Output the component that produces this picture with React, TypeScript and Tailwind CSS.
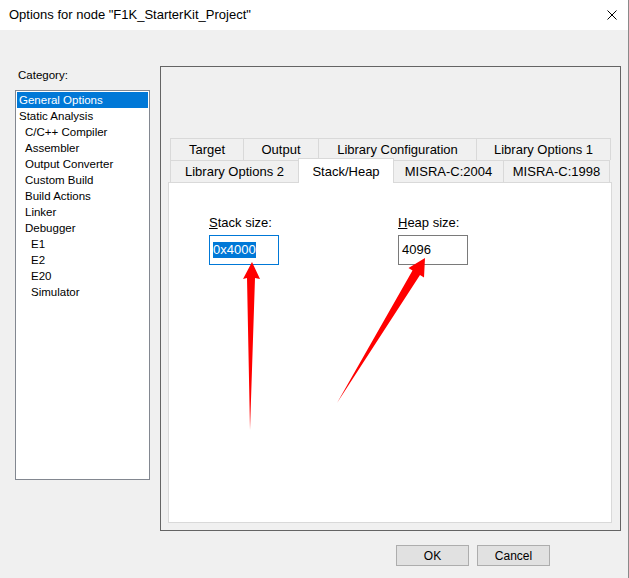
import React from "react";

const categories: { label: string; level: number }[] = [
  { label: "General Options", level: 0 },
  { label: "Static Analysis", level: 0 },
  { label: "C/C++ Compiler", level: 1 },
  { label: "Assembler", level: 1 },
  { label: "Output Converter", level: 1 },
  { label: "Custom Build", level: 1 },
  { label: "Build Actions", level: 1 },
  { label: "Linker", level: 1 },
  { label: "Debugger", level: 1 },
  { label: "E1", level: 2 },
  { label: "E2", level: 2 },
  { label: "E20", level: 2 },
  { label: "Simulator", level: 2 },
];

const indent = ["pl-[2px]", "pl-[8px]", "pl-[14px]"];

const topTabs = [
  { label: "Target", w: "w-[73px]" },
  { label: "Output", w: "w-[75px]" },
  { label: "Library Configuration", w: "w-[158px]" },
  { label: "Library Options 1", w: "w-[135px] border-r" },
];

function Arrows() {
  // red annotation arrows drawn over the dialog
  return (
    <svg className="absolute inset-0 pointer-events-none" width="629" height="578">
      <polygon
        points="250,430 255,278 260,279 252,262 243,279 247,278"
        fill="#ff0000"
      />
      <polygon
        points="337,403 420,275 424,277.5 425,258 408.5,268 412.5,270.5"
        fill="#ff0000"
      />
    </svg>
  );
}

export default function App() {
  return (
    <div
      className="relative w-[629px] h-[578px] bg-[#f0f0f0] border-r border-[#8a8a8a] overflow-hidden text-[13px] text-black"
      style={{ fontFamily: '"Liberation Sans", Arial, sans-serif' }}
    >
      {/* title bar */}
      <div className="h-[30px] bg-white flex items-center justify-between pl-[9px] pr-[11px]">
        <span className="text-[13px]">Options for node "F1K_StarterKit_Project"</span>
        <svg width="10" height="10" viewBox="0 0 10 10">
          <path d="M0.5 0.5L9.5 9.5M9.5 0.5L0.5 9.5" stroke="#000" strokeWidth="1" />
        </svg>
      </div>

      <div className="flex">
        {/* category list */}
        <div className="pl-[15px] pt-[37px] w-[160px] text-[11.5px]">
          <div className="leading-[16px] pl-[3px] mb-[7px]">Category:</div>
          <div className="w-[135px] h-[390px] bg-white border border-[#828790] p-px">
            {categories.map((c, i) => (
              <div
                key={c.label}
                className={
                  "h-[16px] leading-[16px] whitespace-nowrap " +
                  indent[c.level] +
                  (i === 0 ? " bg-[#0078d7] text-white" : "")
                }
              >
                {c.label}
              </div>
            ))}
          </div>
        </div>

        {/* options panel */}
        <div className="mt-[36px] w-[461px] h-[465px] border border-[#646464] pl-[7px] pr-[8px] pt-[71px] pb-[7px] flex flex-col">
          <div className="pl-[2px]">
            <div className="flex h-[22px]">
              {topTabs.map((t) => (
                <div
                  key={t.label}
                  className={"h-[22px] border-t border-l border-[#d9d9d9] flex items-center justify-center " + t.w}
                >
                  {t.label}
                </div>
              ))}
            </div>
            <div className="flex h-[22px] items-end">
              <div className="w-[128px] h-[22px] border-t border-l border-[#d9d9d9] flex items-center justify-center">
                Library Options 2
              </div>
              <div className="relative z-10 w-[96px] h-[25px] -mb-px bg-white border-t border-l border-r border-[#d9d9d9] flex items-start pt-[3px] justify-center">
                Stack/Heap
              </div>
              <div className="w-[109px] h-[22px] border-t border-[#d9d9d9] flex items-center justify-center">
                MISRA-C:2004
              </div>
              <div className="w-[107px] h-[22px] border-t border-l border-r border-[#d9d9d9] flex items-center justify-center">
                MISRA-C:1998
              </div>
            </div>
          </div>
          <div className="flex-1 bg-white border border-[#d9d9d9] pl-[40px] pt-[32px] flex gap-[119px]">
            <div>
              <div className="leading-[16px] mb-[4px]">
                <span className="underline">S</span>tack size:
              </div>
              <div className="w-[70px] h-[30px] border border-[#0078d7] pl-[3px] flex items-center">
                <span className="bg-[#0078d7] text-white leading-[16px]">0x4000</span>
              </div>
            </div>
            <div>
              <div className="leading-[16px] mb-[4px]">
                <span className="underline">H</span>eap size:
              </div>
              <div className="w-[70px] h-[30px] border border-[#7a7a7a] pl-[3px] flex items-center">
                4096
              </div>
            </div>
          </div>
        </div>
      </div>

      {/* buttons */}
      <div className="flex justify-end gap-[8px] pr-[78px] mt-[14px]">
        <button className="w-[73px] h-[21px] bg-[#e1e1e1] border border-[#adadad] text-[12px]">OK</button>
        <button className="w-[73px] h-[21px] bg-[#e1e1e1] border border-[#adadad] text-[12px]">Cancel</button>
      </div>

      <Arrows />
    </div>
  );
}
